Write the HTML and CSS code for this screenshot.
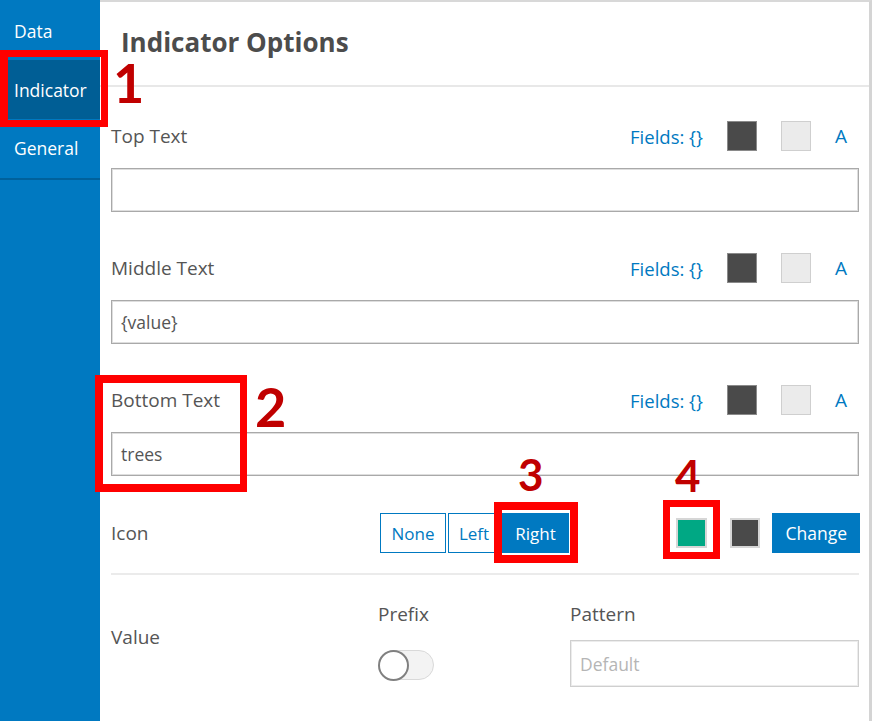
FILE: index.html
```html
<!DOCTYPE html>
<html lang="en">
<head>
<meta charset="utf-8">
<title>Indicator Options</title>
<link rel="stylesheet" href="styles.css">
</head>
<body>
<div class="app">
  <nav class="sidebar">
    <div class="nav-item">Data</div>
    <div class="nav-item active">Indicator</div>
    <div class="nav-item">General</div>
  </nav>
  <main class="main">
    <header class="header"><h1 class="title">Indicator Options</h1></header>
    <div class="content">
      <section class="field">
        <div class="field-head">
          <span class="label">Top Text</span>
          <div class="tools">
            <span class="fields">Fields: {}</span>
            <span class="swatch dark"></span>
            <span class="swatch light"></span>
            <span class="font-a">A</span>
          </div>
        </div>
        <div class="input"></div>
      </section>
      <section class="field">
        <div class="field-head">
          <span class="label">Middle Text</span>
          <div class="tools">
            <span class="fields">Fields: {}</span>
            <span class="swatch dark"></span>
            <span class="swatch light"></span>
            <span class="font-a">A</span>
          </div>
        </div>
        <div class="input">{value}</div>
      </section>
      <section class="field">
        <div class="field-head">
          <span class="label">Bottom Text</span>
          <div class="tools">
            <span class="fields">Fields: {}</span>
            <span class="swatch dark"></span>
            <span class="swatch light"></span>
            <span class="font-a">A</span>
          </div>
        </div>
        <div class="input">trees</div>
      </section>
      <div class="icon-row">
        <span class="label icon-label">Icon</span>
        <div class="seg">
          <button class="seg-btn w-none">None</button>
          <button class="seg-btn w-left">Left</button>
          <button class="seg-btn w-right on">Right</button>
        </div>
        <div class="icon-tools">
          <span class="swatch green"></span>
          <span class="swatch dark2"></span>
          <button class="btn-primary">Change</button>
        </div>
      </div>
      <div class="value-row">
        <span class="label value-label">Value</span>
        <div class="col">
          <span class="label">Prefix</span>
          <div class="toggle"><span class="knob"></span></div>
        </div>
        <div class="col">
          <span class="label">Pattern</span>
          <div class="input pattern">Default</div>
        </div>
      </div>
    </div>
  </main>
</div>
<div class="anno box1"></div>
<div class="anno box2"></div>
<div class="anno box3"></div>
<div class="anno box4"></div>
<div class="num num1">1</div>
<div class="num num2">2</div>
<div class="num num3">3</div>
<div class="num num4">4</div>
</body>
</html>
```
FILE: styles.css
```css
* { box-sizing: border-box; }
html, body { margin: 0; padding: 0; }
body {
  width: 872px;
  height: 721px;
  overflow: hidden;
  background: #fff;
  font-family: "Open Sans", "Noto Sans", sans-serif;
  color: #555;
  position: relative;
}
.app { display: flex; height: 721px; }

.sidebar {
  width: 100px;
  flex: none;
  background: #0079c1;
  padding-top: 1px;
}
.nav-item {
  height: 59px;
  display: flex;
  align-items: center;
  padding-left: 14px;
  color: #fff;
  font-size: 17.5px;
}
.nav-item:last-child { border-bottom: 2px solid #00619b; height: 61px; padding-bottom: 2px; }
.nav-item.active { background: #005e95; }

.main {
  flex: 1;
  border-top: 2px solid #d8d8d8;
  border-right: 3px solid #d4d4d4;
  display: flex;
  flex-direction: column;
}
.header {
  height: 85px;
  border-bottom: 2px solid #e8e8e8;
  display: flex;
  align-items: center;
  padding: 0 0 4px 21px;
}
.title {
  margin: 0;
  font-size: 26px;
  line-height: 30px;
  font-weight: 700;
  color: #4c4c4c;
}
.content { padding: 34px 10px 0 11px; }

.label { font-size: 19px; line-height: 24px; color: #555; }

.field { margin-bottom: 41px; }
.field:nth-child(3) { margin-bottom: 37px; }
.field-head {
  height: 30px;
  display: flex;
  align-items: center;
  justify-content: space-between;
  margin-bottom: 17px;
}
.tools { display: flex; align-items: center; gap: 24px; padding-right: 12px; }
.fields { color: #0079c1; font-size: 18.5px; }
.font-a { color: #0079c1; font-size: 19px; }
.swatch { display: block; width: 30px; height: 30px; }
.swatch.dark { background: #4a4a4a; border: 1px solid #8a8a8a; }
.swatch.light { background: #ebebeb; border: 1px solid #cfcfcf; }

.input {
  height: 44px;
  border: 1px solid #a9a9a9;
  box-shadow: inset 0 0 0 1px #dedede;
  padding-left: 9px;
  display: flex;
  align-items: center;
  font-size: 17.5px;
  color: #555;
}

.icon-row {
  height: 40px;
  display: flex;
  align-items: center;
  margin-bottom: 20px;
}
.icon-label { width: 269px; }
.seg { display: flex; gap: 2px; height: 40px; }
.seg-btn {
  font-family: inherit;
  font-size: 17px;
  color: #0079c1;
  background: #fff;
  border: 1px solid #0079c1;
  padding: 0;
  height: 40px;
  margin: 0;
  text-align: center;
}
.w-none { width: 66px; }
.w-left { width: 52px; }
.w-right { width: 67px; }
.seg-btn.on { background: #0079c1; color: #fff; }
.icon-tools { margin-left: auto; display: flex; align-items: center; }
.swatch.green { background: #00a884; border: 2px solid #d6d6d6; width: 31px; margin-right: 23px; }
.swatch.dark2 { background: #4a4a4a; border: 2px solid #d6d6d6; margin-right: 12px; }
.btn-primary {
  font-family: inherit;
  font-size: 17.5px;
  color: #fff;
  background: #0079c1;
  border: 1px solid #0079c1;
  height: 40px;
  padding: 0 12px;
  margin: 0 -1px 0 0;
}

.value-row {
  border-top: 2px solid #ebebeb;
  padding-top: 27px;
  display: grid;
  grid-template-columns: 267px 192px 1fr;
}
.value-label { margin-top: 23px; }
.col { display: flex; flex-direction: column; align-items: flex-start; }
.toggle {
  margin-top: 24px;
  width: 55px;
  height: 30px;
  border-radius: 15px;
  background: #f3f3f3;
  border: 1px solid #d9d9d9;
  position: relative;
  margin-left: 1px;
}
.knob {
  position: absolute;
  left: -2px;
  top: -1px;
  width: 31px;
  height: 31px;
  border-radius: 50%;
  background: #fff;
  border: 2px solid #808080;
}
.input.pattern {
  margin-top: 14px;
  width: 100%;
  height: 47px;
  border: 1px solid #cfcfcf;
  box-shadow: inset 0 0 0 1px #ececec;
  color: #b5b5b5;
}

.anno { position: absolute; border: 7px solid #ff0000; }
.box1 { left: 0; top: 50px; width: 108px; height: 77px; border-left-width: 8px; }
.box2 { left: 95px; top: 375px; width: 152px; height: 117px; border-width: 8px 7px 8px 8px; }
.box3 { left: 494px; top: 502px; width: 84px; height: 61px; border-width: 8px; }
.box4 { left: 663px; top: 500px; width: 57px; height: 59px; }

.num {
  position: absolute;
  font-family: "Lato", sans-serif;
  font-weight: 700;
  color: #c00000;
  line-height: 0.75;
}
.num1 { left: 113px; top: 63px; font-size: 54px; }
.num2 { left: 255px; top: 387px; font-size: 54px; }
.num3 { left: 518px; top: 458px; font-size: 44px; }
.num4 { left: 675px; top: 459px; font-size: 44px; }
```
